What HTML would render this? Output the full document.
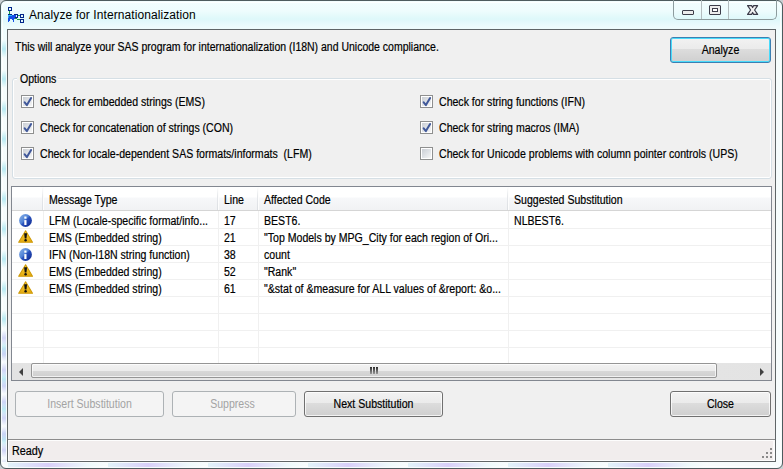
<!DOCTYPE html>
<html><head><meta charset="utf-8">
<style>
*{box-sizing:border-box;margin:0;padding:0}
html,body{width:783px;height:469px;overflow:hidden;background:#c9cfd2;font-family:"Liberation Sans",sans-serif;}
.win{position:absolute;left:0;top:0;width:783px;height:469px;border:1px solid #4e5b5e;border-radius:6px;
 background:linear-gradient(180deg,#f2fdfe 0,#eefcfd 10px,#def8fa 18px,#eefcfd 26px,#f5fcfc 60px,#f7fcfd 100%);}
.frin{position:absolute;left:1px;top:1px;right:1px;bottom:1px;border:1px solid rgba(255,255,255,.85);border-radius:5px}
.t{position:absolute;white-space:nowrap;font-size:12px;line-height:14px;color:#000;transform:scaleX(.88);transform-origin:0 0;-webkit-text-stroke:0.2px #000}
.client{position:absolute;left:7px;top:29px;width:769px;height:433px;border:1px solid #5f6567;background:#f0f0f0}
.btn{position:absolute;height:26px;border:1px solid #707070;border-radius:3px;
 background:linear-gradient(180deg,#f2f2f2 0,#ebebeb 11px,#dddddd 11px,#cfcfcf 100%);box-shadow:inset 0 0 0 1px rgba(255,255,255,.75)}
.btn.def{border-color:#3c7fb1;box-shadow:inset 0 0 0 1px #48dbfb}
.btn.dis{border-color:#adb2b5;background:#f4f4f4;box-shadow:none}
.btn span{position:absolute;left:0;right:0;text-align:center;font-size:12px;line-height:14px;top:5px;color:#000;transform:scaleX(.88);transform-origin:50% 0;-webkit-text-stroke:0.2px #000}
.btn.dis span{color:#a3a3a3;-webkit-text-stroke:0}
.cb{position:absolute;width:13px;height:13px;border:1px solid #8e8f8f;background:#fff}
.cb i{position:absolute;left:1px;top:1px;width:9px;height:9px;background:linear-gradient(135deg,#cbcfd5 0,#dfe2e6 50%,#f6f6f6 100%)}
.cb svg{position:absolute;left:1px;top:1px}
.gb{position:absolute;left:12px;top:78px;width:760px;height:101px;border:1px solid #d5dfe5;border-radius:3px;box-shadow:inset 0 0 0 1px #fff}
.lv{position:absolute;left:11px;top:186px;width:761px;height:195px;border:1px solid #828790;background:#fff;overflow:hidden}
.hdr{position:absolute;left:0;top:0;width:759px;height:24px;background:linear-gradient(180deg,#fff 0,#fff 10px,#f7f8fa 11px,#f1f2f4 100%);border-bottom:1px solid #d5d5d5}
.hsep{position:absolute;top:0;width:1px;height:23px;background:linear-gradient(180deg,#fff 0,#e6e8eb 40%,#dcdfe3 100%);box-shadow:1px 0 0 #fdfdfd}
.gl{position:absolute;left:0;width:759px;height:1px;background:#f0f0f0}
.gv{position:absolute;top:24px;width:1px;height:152px;background:#f0f0f0}
</style></head><body>
<div class="win"><div class="frin"></div></div>

<div style="position:absolute;left:2px;top:40px;width:4px;height:420px;background:repeating-linear-gradient(180deg,rgba(170,235,240,.0) 0,rgba(170,230,240,.8) 9px,rgba(170,235,240,0) 18px,rgba(255,255,255,0) 30px);"></div>
<div style="position:absolute;left:2px;top:330px;width:4px;height:132px;background:repeating-linear-gradient(180deg,rgba(200,200,245,0) 0,rgba(195,200,245,.75) 8px,rgba(200,200,245,0) 16px);"></div>
<div style="position:absolute;left:8px;top:463px;width:700px;height:4px;background:repeating-linear-gradient(90deg,rgba(205,235,245,.5) 0,rgba(210,200,248,.85) 40px,rgba(220,245,248,.4) 80px,rgba(255,255,255,.2) 100px);"></div>
<!-- title icon -->
<svg style="position:absolute;left:8px;top:7px" width="16" height="16" viewBox="0 0 16 16" shape-rendering="crispEdges">
 <g fill="#00268a">
  <path d="M0 0h4v4h-4zM1 1v2h2v-2z" fill-rule="evenodd"/>
  <path d="M6 7h4v4h-4zM7 8v2h2v-2z" fill-rule="evenodd"/>
  <path d="M12 7h4v4h-4zM13 8v2h2v-2z" fill-rule="evenodd"/>
  <path d="M12 12h4v4h-4zM13 13v2h2v-2z" fill-rule="evenodd"/>
  <path d="M0 7h4v1h-4z"/>
 </g>
 <g fill="#1f9a46">
  <rect x="1" y="4" width="1" height="3"/>
  <rect x="10" y="8" width="2" height="1"/>
  <rect x="7" y="11" width="2" height="1"/>
  <rect x="9" y="12" width="3" height="1"/>
 </g>
 <path d="M0 8h8v2h-1v2h-1v3h-1v-2h-1v-1h-2v2h-1v1h-1z" fill="#1550e6"/>
 <path d="M0 8h4v1h-4z" fill="#27c6f4"/>
 <rect x="0" y="9" width="1" height="2" fill="#3aa0f0"/>
</svg>
<div class="t" style="left:29px;top:8px;font-size:12px;line-height:15px;transform:none;color:#000;-webkit-text-stroke:0;letter-spacing:0.08px">Analyze for Internationalization</div>

<!-- caption buttons -->
<div style="position:absolute;left:673px;top:-1px;width:104px;height:21px;border:1px solid #8d9c9e;border-top:none;border-radius:0 0 5px 5px;"></div>
<div style="position:absolute;left:701px;top:0;width:1px;height:19px;background:#b3bdbf"></div>
<div style="position:absolute;left:728px;top:0;width:1px;height:19px;background:#b3bdbf"></div>
<div style="position:absolute;left:682px;top:10px;width:12px;height:5px;border:1px solid #3d3d4a;border-radius:1px;background:#ececec"></div>
<div style="position:absolute;left:709px;top:5px;width:12px;height:10px;border:1px solid #3d3d4a;border-radius:1px;background:#ececec"></div>
<div style="position:absolute;left:712px;top:8px;width:6px;height:4px;border:1px solid #3d3d4a;background:#fff"></div>
<svg style="position:absolute;left:747px;top:5px" width="12" height="11" viewBox="0 0 12 11"><path d="M0.6 0.6H4.6L5.6 2.5L6.6 0.6H10.6L7.6 5L10.6 9.4H6.6L5.6 7.5L4.6 9.4H0.6L3.6 5Z" fill="#f2f2f2" stroke="#3a3a48" stroke-width="1.2" stroke-linejoin="round"/></svg>

<div class="client"></div>

<div class="t" style="left:15px;top:40px;transform:scaleX(.874)">This will analyze your SAS program for internationalization (I18N) and Unicode compliance.</div>
<div class="btn def" style="left:670px;top:37px;width:101px"><span>Analyze</span></div>

<!-- options group -->
<div class="gb"></div>
<div style="position:absolute;left:17px;top:76px;width:41px;height:5px;background:#f0f0f0"></div>
<div class="t" style="left:20px;top:72px">Options</div>

<div class="cb" style="left:21px;top:95px"><i></i><svg width="11" height="11"><path d="M1.7 5.3L3.9 8.1L8.1 1.1" stroke="#40589a" stroke-width="2" fill="none" stroke-linecap="round" stroke-linejoin="round"/></svg></div>
<div class="t" style="left:39.6px;top:95px">Check for embedded strings (EMS)</div>
<div class="cb" style="left:21px;top:121px"><i></i><svg width="11" height="11"><path d="M1.7 5.3L3.9 8.1L8.1 1.1" stroke="#40589a" stroke-width="2" fill="none" stroke-linecap="round" stroke-linejoin="round"/></svg></div>
<div class="t" style="left:39.6px;top:121px">Check for concatenation of strings (CON)</div>
<div class="cb" style="left:21px;top:147px"><i></i><svg width="11" height="11"><path d="M1.7 5.3L3.9 8.1L8.1 1.1" stroke="#40589a" stroke-width="2" fill="none" stroke-linecap="round" stroke-linejoin="round"/></svg></div>
<div class="t" style="left:39.6px;top:147px">Check for locale-dependent SAS formats/informats&nbsp; (LFM)</div>

<div class="cb" style="left:420px;top:95px"><i></i><svg width="11" height="11"><path d="M1.7 5.3L3.9 8.1L8.1 1.1" stroke="#40589a" stroke-width="2" fill="none" stroke-linecap="round" stroke-linejoin="round"/></svg></div>
<div class="t" style="left:438.6px;top:95px">Check for string functions (IFN)</div>
<div class="cb" style="left:420px;top:121px"><i></i><svg width="11" height="11"><path d="M1.7 5.3L3.9 8.1L8.1 1.1" stroke="#40589a" stroke-width="2" fill="none" stroke-linecap="round" stroke-linejoin="round"/></svg></div>
<div class="t" style="left:438.6px;top:121px">Check for string macros (IMA)</div>
<div class="cb" style="left:420px;top:147px"><i></i></div>
<div class="t" style="left:438.6px;top:147px">Check for Unicode problems with column pointer controls (UPS)</div>

<!-- list view -->
<div class="lv">
 <div class="hdr"></div>
 <div class="hsep" style="left:30px"></div>
 <div class="hsep" style="left:205px"></div>
 <div class="hsep" style="left:245px"></div>
 <div class="hsep" style="left:495px"></div>
 <div class="t" style="left:37px;top:6px">Message Type</div>
 <div class="t" style="left:212px;top:6px">Line</div>
 <div class="t" style="left:252px;top:6px">Affected Code</div>
 <div class="t" style="left:502px;top:6px">Suggested Substitution</div>

 <div class="gv" style="left:31px"></div>
 <div class="gv" style="left:206px"></div>
 <div class="gv" style="left:246px"></div>
 <div class="gv" style="left:496px"></div>
 <div class="gl" style="top:41px"></div>
 <div class="gl" style="top:58px"></div>
 <div class="gl" style="top:75px"></div>
 <div class="gl" style="top:92px"></div>
 <div class="gl" style="top:109px"></div>
 <div class="gl" style="top:126px"></div>
 <div class="gl" style="top:143px"></div>
 <div class="gl" style="top:160px"></div>

 <div class="t" style="left:37px;top:27px">LFM (Locale-specific format/info...</div>
 <div class="t" style="left:212px;top:27px">17</div>
 <div class="t" style="left:252px;top:27px">BEST6.</div>
 <div class="t" style="left:502px;top:27px">NLBEST6.</div>
 <div class="t" style="left:37px;top:44px">EMS (Embedded string)</div>
 <div class="t" style="left:212px;top:44px">21</div>
 <div class="t" style="left:252px;top:44px">"Top Models by MPG_City for each region of Ori...</div>
 <div class="t" style="left:37px;top:61px">IFN (Non-I18N string function)</div>
 <div class="t" style="left:212px;top:61px">38</div>
 <div class="t" style="left:252px;top:61px">count</div>
 <div class="t" style="left:37px;top:78px">EMS (Embedded string)</div>
 <div class="t" style="left:212px;top:78px">52</div>
 <div class="t" style="left:252px;top:78px">"Rank"</div>
 <div class="t" style="left:37px;top:95px">EMS (Embedded string)</div>
 <div class="t" style="left:212px;top:95px">61</div>
 <div class="t" style="left:252px;top:95px">"&amp;stat of &amp;measure for ALL values of &amp;report: &amp;o...</div>

 <!-- scrollbar -->
 <div style="position:absolute;left:0;top:176px;width:759px;height:17px;background:linear-gradient(90deg,#e3e3e3,#eaeaea 50%,#e3e3e3)"></div>
 <div style="position:absolute;left:19px;top:176px;width:686px;height:15px;border:1px solid #959595;border-radius:2px;background:linear-gradient(180deg,#f2f2f2 0,#ececec 50%,#d8d8d8 51%,#cfcfcf 100%);box-shadow:inset 0 0 0 1px rgba(255,255,255,.7)"></div>
<svg style="position:absolute;left:358px;top:180px" width="9" height="8"><defs><linearGradient id="gg" x1="0" y1="0" x2="0" y2="1"><stop offset="0" stop-color="#2a2a2a"/><stop offset="1" stop-color="#9a9a9a"/></linearGradient></defs><rect x="0" y="0" width="2" height="7" fill="url(#gg)"/><rect x="3" y="0" width="2" height="7" fill="url(#gg)"/><rect x="6" y="0" width="2" height="7" fill="url(#gg)"/></svg>
 <svg style="position:absolute;left:7px;top:181px" width="5" height="9"><path d="M4 0v8L0 4z" fill="#404040"/></svg>
 <svg style="position:absolute;left:748px;top:181px" width="5" height="9"><path d="M0 0v8L4 4z" fill="#404040"/></svg>
</div>

<!-- icons -->
<svg style="position:absolute;left:19px;top:214px" width="13" height="13" viewBox="0 0 13 13"><defs><linearGradient id="ig" x1="0" y1="0" x2="1" y2="1"><stop offset="0" stop-color="#8ab4ea"/><stop offset=".45" stop-color="#4f80d4"/><stop offset=".52" stop-color="#2a52bc"/><stop offset="1" stop-color="#0a248c"/></linearGradient><linearGradient id="wg" x1="0" y1="0" x2="0" y2="1"><stop offset="0" stop-color="#fad43a"/><stop offset="1" stop-color="#e3a810"/></linearGradient></defs><circle cx="6.5" cy="6.5" r="6.4" fill="url(#ig)"/><rect x="5.3" y="2.5" width="2.2" height="2.2" fill="#fff"/><rect x="5.3" y="6.1" width="2.2" height="4.9" fill="#fff"/></svg>
<svg style="position:absolute;left:18px;top:230px" width="16" height="13" viewBox="0 0 16 13"><path d="M7.6 0.8L14.5 12.3H0.7z" fill="url(#wg)" stroke="#cf9a08" stroke-width="1.1" stroke-linejoin="round"/><path d="M6.1 3.2h3l-0.65 5.4h-1.7z" fill="#111"/><circle cx="7.6" cy="10.3" r="1.2" fill="#111"/></svg>
<svg style="position:absolute;left:19px;top:248px" width="13" height="13" viewBox="0 0 13 13"><circle cx="6.5" cy="6.5" r="6.4" fill="url(#ig)"/><rect x="5.3" y="2.5" width="2.2" height="2.2" fill="#fff"/><rect x="5.3" y="6.1" width="2.2" height="4.9" fill="#fff"/></svg>
<svg style="position:absolute;left:18px;top:264px" width="16" height="13" viewBox="0 0 16 13"><path d="M7.6 0.8L14.5 12.3H0.7z" fill="url(#wg)" stroke="#cf9a08" stroke-width="1.1" stroke-linejoin="round"/><path d="M6.1 3.2h3l-0.65 5.4h-1.7z" fill="#111"/><circle cx="7.6" cy="10.3" r="1.2" fill="#111"/></svg>
<svg style="position:absolute;left:18px;top:281px" width="16" height="13" viewBox="0 0 16 13"><path d="M7.6 0.8L14.5 12.3H0.7z" fill="url(#wg)" stroke="#cf9a08" stroke-width="1.1" stroke-linejoin="round"/><path d="M6.1 3.2h3l-0.65 5.4h-1.7z" fill="#111"/><circle cx="7.6" cy="10.3" r="1.2" fill="#111"/></svg>

<!-- bottom buttons -->
<div class="btn dis" style="left:15px;top:391px;width:149px"><span>Insert Substitution</span></div>
<div class="btn dis" style="left:172px;top:391px;width:124px"><span style="left:-3px">Suppress</span></div>
<div class="btn" style="left:304px;top:391px;width:139px"><span>Next Substitution</span></div>
<div class="btn" style="left:670px;top:391px;width:101px"><span>Close</span></div>

<!-- status bar -->
<div style="position:absolute;left:8px;top:439px;width:767px;height:1px;background:#8c8c8c"></div>
<div style="position:absolute;left:8px;top:440px;width:767px;height:21px;background:#f1eded;border:1px solid #fdfdfd;border-right:2px solid #fbfbfb"></div>
<div class="t" style="left:12px;top:444px;font-size:12px;transform:scaleX(.9)">Ready</div>
<svg style="position:absolute;left:762px;top:448px" width="11" height="11"><g fill="#8a8a8a"><rect x="8" y="0" width="2" height="2"/><rect x="4" y="4" width="2" height="2"/><rect x="8" y="4" width="2" height="2"/><rect x="0" y="8" width="2" height="2"/><rect x="4" y="8" width="2" height="2"/><rect x="8" y="8" width="2" height="2"/></g></svg>
</body></html>
